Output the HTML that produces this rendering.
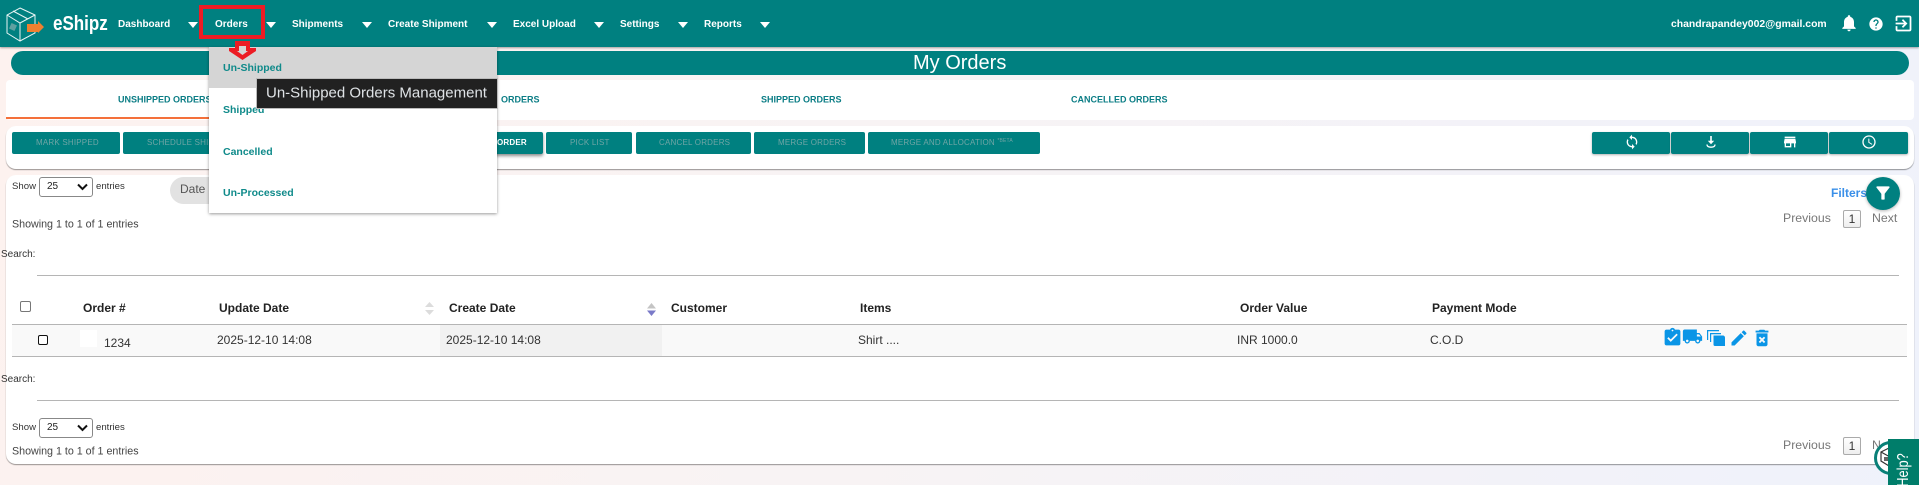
<!DOCTYPE html>
<html><head><meta charset="utf-8"><title>My Orders</title>
<style>
html,body{margin:0;padding:0}
body{width:1919px;height:485px;position:relative;overflow:hidden;font-family:"Liberation Sans",sans-serif;background:linear-gradient(100deg,#fdf2ef 0%,#f8f3f4 45%,#eff2fb 100%);color:#333}
.a{position:absolute}
.t{position:absolute;white-space:nowrap;transform:translateY(-50%);line-height:1}
.n{font-size:10px;font-weight:bold;color:#fff}
.c{width:0;height:0;border-left:5px solid transparent;border-right:5px solid transparent;border-top:6px solid #fff;position:absolute;top:21px}
.card{position:absolute;background:#fff}
.b{position:absolute;top:132px;height:22px;background:#008080;border-radius:2px}
.s{box-shadow:0 1px 2px rgba(0,0,0,.3)}
.bt{font-size:8px;color:#6fa5a5;letter-spacing:.2px}
.tab{font-size:9px;font-weight:bold;color:#0b7d85}
.th{font-size:12px;font-weight:bold;color:#222}
.td{font-size:12px;color:#333}
.sm{font-size:9.6px;color:#333}
.dd{font-size:10.5px;font-weight:bold;color:#0f8a8a}
.pg{font-size:12.3px;color:#777}
.pb{position:absolute;width:16px;height:16px;border:1px solid #aaa;background:linear-gradient(#fff,#eee);border-radius:2px;font-size:12px;line-height:16px;text-align:center;color:#333}
.sel{position:absolute;width:52px;height:18px;border:1px solid #888;border-radius:3px;background:#fff;font-size:10px;line-height:18px;text-indent:7px;color:#222}
.sel svg{position:absolute;right:4px;top:5px}
.ln{position:absolute;height:1px;background:#b5b5b5}
svg{position:absolute;display:block}
</style></head><body>

<!-- Header -->
<div class="a" style="left:0;top:0;width:1919px;height:47px;background:#008080;box-shadow:0 1px 2px rgba(0,0,0,.35)"></div>
<svg style="left:0;top:0" width="50" height="47" viewBox="0 0 50 47" fill="none" stroke="#e8f4f4" stroke-width="1">
<path d="M20 8L35 15V33L20 41L7 33V15Z"/><path d="M7 15L20 23L35 15M20 23V41M13 11L28 19"/>
<rect x="10" y="24" width="6" height="6" fill="#5fa0a0" stroke="none" transform="rotate(25 13 27)"/>
<path d="M27 24H38V21L44 27L38 33V32H27Z" fill="#f08030" stroke="none"/>
</svg>
<div class="t" style="left:53px;top:24px;font-size:20px;font-weight:bold;color:#fff;transform:translateY(-50%) scaleX(.85);transform-origin:left center">eShipz</div>

<div class="t n" style="left:118px;top:25px">Dashboard</div><div class="c" style="left:188px;top:22px"></div>
<div class="t n" style="left:215px;top:25px">Orders</div><div class="c" style="left:266px;top:22px"></div>
<div class="t n" style="left:292px;top:25px">Shipments</div><div class="c" style="left:362px;top:22px"></div>
<div class="t n" style="left:388px;top:25px">Create Shipment</div><div class="c" style="left:487px;top:22px"></div>
<div class="t n" style="left:513px;top:25px">Excel Upload</div><div class="c" style="left:594px;top:22px"></div>
<div class="t n" style="left:620px;top:25px">Settings</div><div class="c" style="left:678px;top:22px"></div>
<div class="t n" style="left:704px;top:25px">Reports</div><div class="c" style="left:760px;top:22px"></div>

<div class="t" style="left:1671px;top:25px;font-size:10.4px;font-weight:bold;color:#fff">chandrapandey002@gmail.com</div>
<svg style="left:1839px;top:13px" width="20" height="20" viewBox="0 0 24 24" fill="#fff"><path d="M12 22c1.1 0 2-.9 2-2h-4c0 1.1.9 2 2 2zm6-6v-5c0-3.07-1.63-5.64-4.5-6.32V4c0-.83-.67-1.5-1.5-1.5s-1.5.67-1.5 1.5v.68C7.64 5.36 6 7.92 6 11v5l-2 2v1h16v-1l-2-2z"/></svg>
<svg style="left:1868px;top:16px" width="16" height="16" viewBox="0 0 24 24" fill="#fff"><path d="M12 2C6.48 2 2 6.48 2 12s4.48 10 10 10 10-4.48 10-10S17.52 2 12 2zm1 17h-2v-2h2v2zm2.07-7.75l-.9.92C13.45 12.9 13 13.5 13 15h-2v-.5c0-1.1.45-2.1 1.17-2.83l1.24-1.26c.37-.36.59-.86.59-1.41 0-1.1-.9-2-2-2s-2 .9-2 2H8c0-2.21 1.79-4 4-4s4 1.79 4 4c0 .88-.36 1.68-.93 2.25z"/></svg>
<svg style="left:1893px;top:13px" width="21" height="21" viewBox="0 0 24 24" fill="#fff"><path d="M10.09 15.59L11.5 17l5-5-5-5-1.41 1.41L12.67 11H3v2h9.67l-2.58 2.59zM19 3H5c-1.11 0-2 .9-2 2v4h2V5h14v14H5v-4H3v4c0 1.1.89 2 2 2h14c1.1 0 2-.9 2-2V5c0-1.1-.9-2-2-2z"/></svg>

<!-- Title -->
<div class="a" style="left:11px;top:51px;width:1898px;height:24px;background:#008080;border-radius:12px"></div>
<div class="t" style="left:913px;top:63px;font-size:20px;color:#fff">My Orders</div>

<!-- Tabs -->
<div class="card" style="left:6px;top:80px;width:1908px;height:40px;border-radius:4px"></div>
<div class="a" style="left:6px;top:117px;width:316px;height:2px;background:#f4703a"></div>
<div class="t tab" style="left:118px;top:100px">UNSHIPPED ORDERS</div>
<div class="t tab" style="left:501px;top:100px">ORDERS</div>
<div class="t tab" style="left:761px;top:100px">SHIPPED ORDERS</div>
<div class="t tab" style="left:1071px;top:100px">CANCELLED ORDERS</div>

<!-- Buttons -->
<div class="card" style="left:6px;top:126px;width:1908px;height:43px;border-radius:10px;box-shadow:0 1px 1px rgba(0,0,0,.4)"></div>
<div class="b" style="left:12px;width:108px"></div><div class="t bt" style="left:36px;top:143px">MARK SHIPPED</div>
<div class="b" style="left:123px;width:130px"></div><div class="t bt" style="left:147px;top:143px">SCHEDULE SHIPMENT</div>
<div class="b" style="left:440px;width:103px;box-shadow:0 2px 3px rgba(0,0,0,.45)"></div><div class="t bt" style="left:497px;top:143px;color:#fff;font-weight:bold">ORDER</div>
<div class="b" style="left:546px;width:86px"></div><div class="t bt" style="left:570px;top:143px">PICK LIST</div>
<div class="b" style="left:636px;width:115px"></div><div class="t bt" style="left:659px;top:143px">CANCEL ORDERS</div>
<div class="b" style="left:754px;width:111px"></div><div class="t bt" style="left:778px;top:143px">MERGE ORDERS</div>
<div class="b" style="left:868px;width:172px"></div><div class="t bt" style="left:891px;top:143px">MERGE AND ALLOCATION <span style="font-size:5px;vertical-align:3px">*BETA</span></div>

<div class="b s" style="left:1592px;width:78px"></div>
<div class="b s" style="left:1671px;width:78px"></div>
<div class="b s" style="left:1750px;width:78px"></div>
<div class="b s" style="left:1829px;width:79px"></div>
<svg style="left:1624px;top:134px" width="16" height="16" viewBox="0 0 24 24" fill="#fff"><path d="M12 4V1L8 5l4 4V6c3.31 0 6 2.69 6 6 0 1.01-.25 1.97-.7 2.8l1.46 1.46C19.54 15.03 20 13.57 20 12c0-4.42-3.58-8-8-8zm0 14c-3.31 0-6-2.69-6-6 0-1.01.25-1.97.7-2.8L5.24 7.74C4.46 8.97 4 10.43 4 12c0 4.42 3.58 8 8 8v3l4-4-4-4v3z"/></svg>
<svg style="left:1703px;top:134px" width="16" height="16" viewBox="0 0 16 16" fill="none" stroke="#fff" stroke-width="1.6"><path d="M8 2V9"/><path d="M4.8 6.8L8 10.2L11.2 6.8" fill="#fff" stroke="none"/><path d="M4 10.5C4 12.5 6 13.2 8 13.2S12 12.5 12 10.5" stroke-width="1.3"/></svg>
<svg style="left:1782px;top:134px" width="16" height="16" viewBox="0 0 24 24" fill="#fff"><path d="M20 4H4v2h16V4zm1 10v-2l-1-5H4l-1 5v2h1v6h10v-6h4v6h2v-6h1zm-9 4H6v-4h6v4z"/></svg>
<svg style="left:1861px;top:134px" width="16" height="16" viewBox="0 0 24 24" fill="#fff"><path d="M11.99 2C6.47 2 2 6.48 2 12s4.47 10 9.99 10C17.52 22 22 17.52 22 12S17.52 2 11.99 2zM12 20c-4.42 0-8-3.58-8-8s3.58-8 8-8 8 3.58 8 8-3.58 8-8 8zm.5-13H11v6l5.25 3.15.75-1.23-4.5-2.67z"/></svg>

<!-- Table card -->
<div class="card" style="left:6px;top:175px;width:1908px;height:289px;border-radius:10px;box-shadow:0 1px 1px rgba(0,0,0,.4)"></div>

<div class="t sm" style="left:12px;top:187px">Show</div>
<div class="sel" style="left:39px;top:177px">25<svg width="11" height="8" viewBox="0 0 11 8" fill="none" stroke="#111" stroke-width="2"><path d="M1 1.5L5.5 6L10 1.5"/></svg></div>
<div class="t sm" style="left:96px;top:187px">entries</div>
<div class="a" style="left:170px;top:177px;width:60px;height:27px;background:#e2e2e2;border-radius:14px 0 0 14px"></div>
<div class="t" style="left:180px;top:189px;font-size:12px;color:#555">Date F</div>
<div class="t" style="left:12px;top:225px;font-size:10.7px;color:#444">Showing 1 to 1 of 1 entries</div>

<div class="t" style="left:1831px;top:193px;font-size:12px;font-weight:bold;color:#3a8fe8">Filters</div>
<div class="a" style="left:1866px;top:177px;width:34px;height:33px;border-radius:50%;background:#008080;box-shadow:0 1px 3px rgba(0,0,0,.3)"></div>
<svg style="left:1873px;top:183px" width="20" height="20" viewBox="0 0 24 24" fill="#fff"><path d="M4.25 5.61C6.27 8.2 10 13 10 13v6c0 .55.45 1 1 1h2c.55 0 1-.45 1-1v-6s3.72-4.8 5.74-7.39c.51-.66.04-1.61-.79-1.61H5.04c-.83 0-1.3.95-.79 1.61z"/></svg>
<div class="t pg" style="left:1783px;top:218px">Previous</div>
<div class="pb" style="left:1843px;top:210px">1</div>
<div class="t pg" style="left:1872px;top:218px">Next</div>

<div class="t" style="left:1px;top:255px;font-size:10px;color:#333">Search:</div>
<div class="ln" style="left:37px;top:275px;width:1862px"></div>

<!-- Table -->
<div class="a" style="left:20px;top:301px;width:9px;height:9px;border:1px solid #777;border-radius:2px;background:#fff"></div>
<div class="t th" style="left:83px;top:308px">Order #</div>
<div class="t th" style="left:219px;top:308px">Update Date</div>
<svg style="left:424px;top:302px" width="11" height="13" viewBox="0 0 11 13" fill="#dcdcdc"><path d="M5.5 0L10 5H1ZM5.5 13L1 8H10Z"/></svg>
<div class="t th" style="left:449px;top:308px">Create Date</div>
<svg style="left:646px;top:303px" width="11" height="13" viewBox="0 0 11 13"><path d="M5.5 0L10 5.5H1Z" fill="#c4c4c4"/><path d="M5.5 13L1 7.5H10Z" fill="#7a7ac8"/></svg>
<div class="t th" style="left:671px;top:308px">Customer</div>
<div class="t th" style="left:860px;top:308px">Items</div>
<div class="t th" style="left:1240px;top:308px">Order Value</div>
<div class="t th" style="left:1432px;top:308px">Payment Mode</div>

<div class="a" style="left:12px;top:324px;width:1895px;height:32px;background:#f9f9f9"></div>
<div class="a" style="left:440px;top:324px;width:222px;height:32px;background:#f1f1f1"></div>
<div class="ln" style="left:12px;top:324px;width:1895px"></div>
<div class="ln" style="left:12px;top:356px;width:1895px"></div>
<div class="a" style="left:38px;top:335px;width:8px;height:8px;border:1.5px solid #111;border-radius:2px;background:#fff"></div>
<div class="a" style="left:80px;top:330px;width:17px;height:17px;background:#fff"></div>
<div class="t td" style="left:104px;top:343px">1234</div>
<div class="t td" style="left:217px;top:340px">2025-12-10 14:08</div>
<div class="t td" style="left:446px;top:340px">2025-12-10 14:08</div>
<div class="t td" style="left:858px;top:340px">Shirt ....</div>
<div class="t td" style="left:1237px;top:340px">INR 1000.0</div>
<div class="t td" style="left:1430px;top:340px">C.O.D</div>

<svg style="left:1662px;top:327px" width="21" height="21" viewBox="0 0 24 24" fill="#0a95e6"><path d="M19 3h-4.18C14.4 1.84 13.3 1 12 1c-1.3 0-2.4.84-2.82 2H5c-1.1 0-2 .9-2 2v14c0 1.1.9 2 2 2h14c1.1 0 2-.9 2-2V5c0-1.1-.9-2-2-2zm-7 0c.55 0 1 .45 1 1s-.45 1-1 1-1-.45-1-1 .45-1 1-1zm-2 14l-4-4 1.41-1.41L10 14.17l6.59-6.59L18 9l-8 8z"/></svg>
<svg style="left:1682px;top:326px" width="21" height="21" viewBox="0 0 24 24" fill="#0a95e6"><path d="M20 8h-3V4H3c-1.1 0-2 .9-2 2v11h2c0 1.66 1.34 3 3 3s3-1.34 3-3h6c0 1.66 1.34 3 3 3s3-1.34 3-3h2v-5l-3-4zM6 18.5c-.83 0-1.5-.67-1.5-1.5s.67-1.5 1.5-1.5 1.5.67 1.5 1.5-.67 1.5-1.5 1.5zm13.5-9l1.96 2.5H17V9.5h2.5zm-1.5 9c-.83 0-1.5-.67-1.5-1.5s.67-1.5 1.5-1.5 1.5.67 1.5 1.5-.67 1.5-1.5 1.5z"/></svg>
<svg style="left:1707px;top:330px" width="18" height="16" viewBox="0 0 18 16" fill="#0a95e6"><path d="M0 0H12V1.2H1.2V10H0Z"/><path d="M3 3H14V4.2H4.2V12H3Z"/><path d="M6.5 5.5H16C17 5.5 18 6.5 18 7.5V16H8C7 16 6.5 15.5 6.5 14.5Z"/></svg>
<svg style="left:1729px;top:328px" width="20" height="20" viewBox="0 0 24 24" fill="#0a95e6"><path d="M3 17.25V21h3.75L17.81 9.94l-3.75-3.75L3 17.25zM20.71 7.04c.39-.39.39-1.02 0-1.41l-2.34-2.34c-.39-.39-1.02-.39-1.41 0l-1.83 1.83 3.75 3.75 1.83-1.83z"/></svg>
<svg style="left:1751px;top:327px" width="22" height="22" viewBox="0 0 24 24" fill="#0a95e6"><path d="M6 19c0 1.1.9 2 2 2h8c1.1 0 2-.9 2-2V7H6v12zm2.46-7.12l1.41-1.41L12 12.59l2.12-2.12 1.41 1.41L13.41 14l2.12 2.12-1.41 1.41L12 15.41l-2.12 2.12-1.41-1.41L10.59 14l-2.13-2.12zM15.5 4l-1-1h-5l-1 1H5v2h14V4z"/></svg>

<div class="t" style="left:1px;top:380px;font-size:10px;color:#333">Search:</div>
<div class="ln" style="left:37px;top:400px;width:1862px"></div>

<div class="t sm" style="left:12px;top:428px">Show</div>
<div class="sel" style="left:39px;top:418px">25<svg width="11" height="8" viewBox="0 0 11 8" fill="none" stroke="#111" stroke-width="2"><path d="M1 1.5L5.5 6L10 1.5"/></svg></div>
<div class="t sm" style="left:96px;top:428px">entries</div>
<div class="t" style="left:12px;top:452px;font-size:10.7px;color:#444">Showing 1 to 1 of 1 entries</div>
<div class="t pg" style="left:1783px;top:445px">Previous</div>
<div class="pb" style="left:1843px;top:437px">1</div>
<div class="t pg" style="left:1872px;top:445px">Next</div>

<!-- Help widget -->
<div class="a" style="left:1874px;top:441px;width:28px;height:28px;border-radius:50%;background:#fff;border:3px solid #0a8078"></div>
<svg style="left:1877px;top:445px" width="24" height="24" viewBox="0 0 24 24" fill="none" stroke="#333" stroke-width="1.2"><path d="M12 3L21 8V17L12 21L4 16V7Z"/><path d="M4 7L13 12L21 8M13 12V21"/><rect x="7" y="12" width="4" height="4" fill="#666" stroke="none"/></svg>
<div class="a" style="left:1888px;top:439px;width:31px;height:46px;background:#007d6a"></div>
<div class="a" style="left:1888px;top:439px;width:31px;height:46px;overflow:hidden"><div style="position:absolute;left:16px;top:31px;font-size:16px;color:#fff;white-space:nowrap;line-height:1;transform:translate(-50%,-50%) rotate(-90deg) scaleX(.8)">Help?</div></div>

<!-- Dropdown -->
<div class="a" style="left:209px;top:47px;width:288px;height:166px;background:#fff;box-shadow:0 1px 3px rgba(0,0,0,.4)"></div>
<div class="a" style="left:209px;top:47px;width:288px;height:41px;background:#d5d5d5"></div>
<div class="t dd" style="left:223px;top:68px">Un-Shipped</div>
<div class="t dd" style="left:223px;top:110px">Shipped</div>
<div class="t dd" style="left:223px;top:152px">Cancelled</div>
<div class="t dd" style="left:223px;top:193px">Un-Processed</div>
<div class="a" style="left:257px;top:79px;width:240px;height:29px;background:#212121;box-shadow:0 0 0 1px #bbb"></div>
<div class="t" style="left:266px;top:93px;font-size:15px;color:#dfe3e6">Un-Shipped Orders Management</div>

<!-- Red annotations -->
<div class="a" style="left:199px;top:5px;width:58px;height:26px;border:4px solid #ec1c24"></div>
<svg style="left:228px;top:40px" width="29" height="21" viewBox="0 0 29 21"><path d="M7 1H22V8H28V11L14.5 20L1 11V8H7Z" fill="#ec1c24"/><path d="M11 6H18V11H20L14.5 15L9 11H11Z" fill="#d5d5d5"/></svg>
</body></html>
